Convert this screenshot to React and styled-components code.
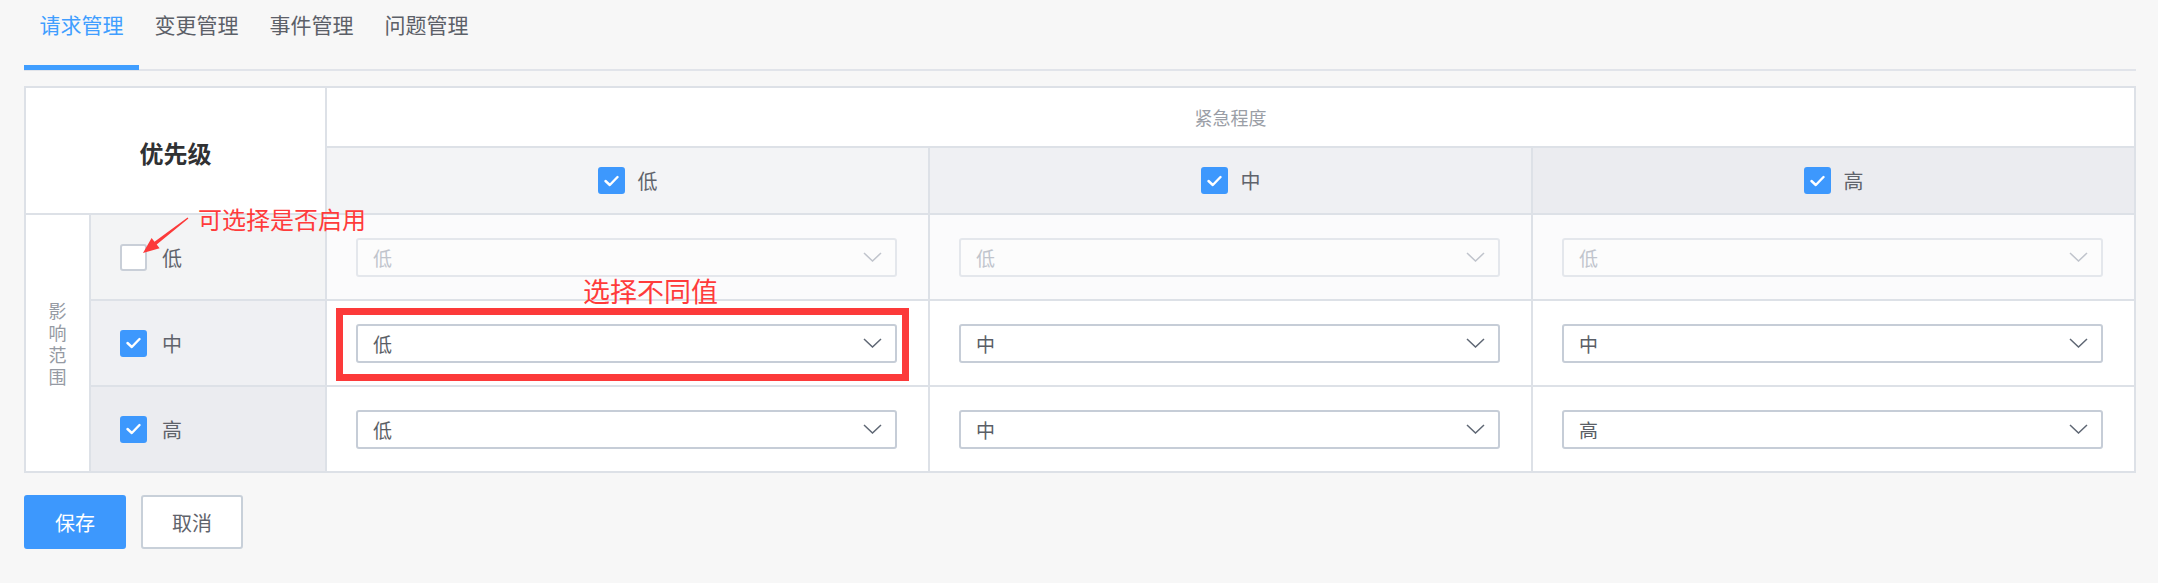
import React from "react";
import styled, { createGlobalStyle } from "styled-components";

const GlobalStyle = createGlobalStyle`
  body {
    margin: 0;
    background: #f7f7f7;
    font-family: "Noto Sans CJK SC", "Noto Sans", sans-serif;
  }
`;

const Page = styled.div`
  position: relative;
  padding: 0 22px 0 24px;
`;

const Tabs = styled.div`
  display: flex;
  height: 71px;
  box-sizing: border-box;
  border-bottom: 2px solid #e1e4ea;
`;

const Tab = styled.div`
  height: 70px;
  box-sizing: border-box;
  padding: 9px 15.5px 0;
  font-size: 21px;
  line-height: 30px;
  color: ${(p) => (p.$active ? "#409eff" : "#5c6068")};
  border-bottom: 5px solid ${(p) => (p.$active ? "#409eff" : "transparent")};
`;

const Grid = styled.div`
  margin-top: 15px;
  display: grid;
  grid-template-columns: 63px 234px repeat(3, 1fr);
  grid-template-rows: 58px 65px 84px 84px 84px;
  gap: 2px;
  padding: 2px;
  background: #dde1e7;
`;

const Cell = styled.div`
  background: ${(p) => p.$bg || "#fff"};
  grid-column: ${(p) => p.$col || "auto"};
  grid-row: ${(p) => p.$row || "auto"};
  display: flex;
  align-items: center;
  justify-content: ${(p) => p.$justify || "flex-start"};
  box-sizing: border-box;
`;

const Corner = styled.div`
  font-size: 24px;
  font-weight: 700;
  color: #303133;
  padding-top: 3px;
`;

const Caption = styled.div`
  font-size: 18px;
  color: #9a9ea6;
`;

const VerticalLabel = styled.div`
  width: 20px;
  font-size: 18px;
  line-height: 22px;
  color: #959aa3;
  text-align: center;
`;

const CheckLine = styled.label`
  display: flex;
  align-items: center;
  gap: ${(p) => p.$gap || 15}px;
  padding-left: ${(p) => p.$pad || 0}px;
  font-size: 20px;
  color: #5f636b;
`;

const Box = styled.span`
  width: 27px;
  height: 27px;
  box-sizing: border-box;
  border-radius: 3px;
  display: flex;
  align-items: center;
  justify-content: center;
  background: ${(p) => (p.$on ? "#3d98fd" : "#fff")};
  border: 2px solid ${(p) => (p.$on ? "#3d98fd" : "#c9cfd8")};
`;

const Select = styled.div`
  flex: 1;
  margin: 0 31px 0 29px;
  height: 39px;
  box-sizing: border-box;
  border: 2px solid ${(p) => (p.$disabled ? "#e4e7ec" : "#c6cdd7")};
  border-radius: 3px;
  background: ${(p) => (p.$disabled ? "#fcfcfc" : "#fff")};
  display: flex;
  align-items: center;
  justify-content: space-between;
  padding: 0 13px 0 15px;
  font-size: 19px;
  color: ${(p) => (p.$disabled ? "#c0c4cc" : "#5a5e66")};
`;

const Actions = styled.div`
  display: flex;
  gap: 15px;
  margin-top: 22px;
`;

const Button = styled.button`
  width: 102px;
  height: 54px;
  border-radius: 3px;
  font-family: inherit;
  font-size: 20px;
  cursor: pointer;
  background: ${(p) => (p.$primary ? "#3d98fd" : "#fff")};
  color: ${(p) => (p.$primary ? "#fff" : "#5f636b")};
  border: 2px solid ${(p) => (p.$primary ? "#3d98fd" : "#c8d0d9")};
`;

const Note = styled.div`
  position: absolute;
  left: ${(p) => p.$x}px;
  top: ${(p) => p.$y}px;
  font-size: ${(p) => p.$size}px;
  line-height: 1;
  color: #ff3b3b;
  white-space: nowrap;
`;

const Highlight = styled.div`
  position: absolute;
  left: 336px;
  top: 308px;
  width: 573px;
  height: 73px;
  box-sizing: border-box;
  border: 7px solid #fc3a3a;
`;

const Arrow = styled.svg`
  position: absolute;
  left: 140px;
  top: 214px;
`;

const Check = () => (
  <svg width="15" height="12" viewBox="0 0 15 12">
    <polyline
      points="1.5,6 5.8,10 13.5,2"
      fill="none"
      stroke="#fff"
      strokeWidth="2.4"
      strokeLinecap="round"
      strokeLinejoin="round"
    />
  </svg>
);

const Chevron = ({ color }) => (
  <svg width="19" height="10" viewBox="0 0 19 10">
    <polyline points="1,1 9.5,9 18,1" fill="none" stroke={color} strokeWidth="1.5" />
  </svg>
);

const Checkbox = ({ on }) => <Box $on={on}>{on && <Check />}</Box>;

const levels = ["低", "中", "高"];
const rows = [
  { label: "低", on: false, values: ["低", "低", "低"], bg: "#f3f4f5" },
  { label: "中", on: true, values: ["低", "中", "中"], bg: "#eff0f3" },
  { label: "高", on: true, values: ["低", "中", "高"], bg: "#ebecf0" },
];
const headBg = ["#f3f4f6", "#eff0f3", "#ebecf0"];

export default function App() {
  return (
    <Page>
      <GlobalStyle />
      <Tabs>
        <Tab $active>请求管理</Tab>
        <Tab>变更管理</Tab>
        <Tab>事件管理</Tab>
        <Tab>问题管理</Tab>
      </Tabs>

      <Grid>
        <Cell $col="span 2" $row="span 2" $justify="center">
          <Corner>优先级</Corner>
        </Cell>
        <Cell $col="span 3" $justify="center">
          <Caption>紧急程度</Caption>
        </Cell>
        {levels.map((l, i) => (
          <Cell key={l} $bg={headBg[i]} $justify="center">
            <CheckLine $gap={13}>
              <Checkbox on />
              {l}
            </CheckLine>
          </Cell>
        ))}
        <Cell $row="span 3" $justify="center">
          <VerticalLabel>影响范围</VerticalLabel>
        </Cell>
        {rows.map((r, ri) => (
          <React.Fragment key={r.label}>
            <Cell $bg={r.bg}>
              <CheckLine $pad={29}>
                <Checkbox on={r.on} />
                {r.label}
              </CheckLine>
            </Cell>
            {r.values.map((v, vi) => (
              <Cell key={vi} $bg={ri === 0 ? "#fbfbfc" : "#fff"}>
                <Select $disabled={!r.on}>
                  {v}
                  <Chevron color={r.on ? "#5f6774" : "#c0c4cc"} />
                </Select>
              </Cell>
            ))}
          </React.Fragment>
        ))}
      </Grid>

      <Actions>
        <Button $primary>保存</Button>
        <Button>取消</Button>
      </Actions>

      <Note $x={198} $y={207} $size={24}>可选择是否启用</Note>
      <Note $x={583} $y={277} $size={27}>选择不同值</Note>
      <Highlight />
      <Arrow width="52" height="44" viewBox="0 0 52 44">
        <polygon
          points="48.4,4.4 16.7,30.6 19.6,34.3 3,39 11.6,24.1 14.5,27.8 47.6,3.6"
          fill="#fc3a3a"
        />
      </Arrow>
    </Page>
  );
}
